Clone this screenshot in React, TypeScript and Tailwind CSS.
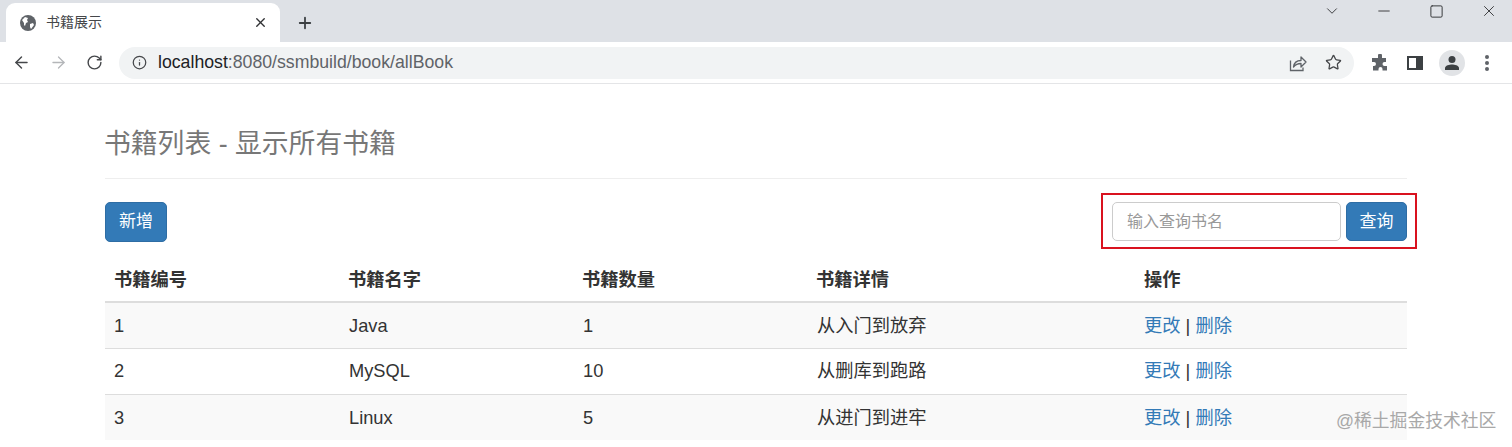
import React from 'react';
import { ArrowLeft, ArrowRight, ChevronDown, Info, Minus, Plus, RotateCw, Square, Star, X } from 'lucide-react';

const FONT = '"Liberation Sans", "Noto Sans CJK SC", sans-serif';

const books = [
    { id: 1, name: 'Java', count: 1, detail: '从入门到放弃' },
    { id: 2, name: 'MySQL', count: 10, detail: '从删库到跑路' },
    { id: 3, name: 'Linux', count: 5, detail: '从进门到进牢' },
];

const GlobeIcon = () => (
    <svg width="16" height="16" viewBox="0 0 16 16" className="shrink-0">
        <circle cx="8" cy="8" r="8" fill="#5f6368" />
        <path d="M2 5l3-3 3 1-1 2 1 2-2 1-1 3-1-1V8zM10 9l3-1 1 2-3 4-1-2z" fill="#fff" />
    </svg>
);

const ShareIcon = () => (
    <svg width="18" height="18" viewBox="0 0 18 18" fill="none" stroke="#5f6368" strokeWidth="1.3">
        <path d="M1.500 6.500v10h12.500v-3" />
        <path d="M4.500 13c.5-4 3.500-6.500 7.500-6.500V3l5 5-5 5V9.500c-3 0-5.500 1-7.500 3.500z" strokeLinejoin="round" />
    </svg>
);

const PuzzleIcon = () => (
    <svg width="18" height="18" viewBox="0 0 18 18">
        <path d="M7 1.500a2 2 0 0 1 4 0V4h4v4h-1.500a2 2 0 0 0 0 4H16v4.500H11.500V15a2 2 0 0 0-4 0v1.500H2V12h1a2 2 0 0 0 0-4H1V4h6z" fill="#5f6368" />
    </svg>
);

const SidePanelIcon = () => (
    <svg width="16" height="16" viewBox="0 0 16 16">
        <path d="M0 1h16v14H0z M2 3v10h7V3z" fill="#3c4043" fillRule="evenodd" />
    </svg>
);

const AvatarIcon = () => (
    <div className="w-[26px] h-[26px] rounded-full bg-[#e1e3e6] flex items-center justify-center">
        <svg width="16" height="16" viewBox="0 0 16 16">
            <circle cx="8" cy="4.500" r="3.500" fill="#3c4043" />
            <path d="M1 15v-2c0-2.500 4.500-3.600 7-3.600s7 1.100 7 3.600v2z" fill="#3c4043" />
        </svg>
    </div>
);

const BrowserChrome = () => (
    <div>
        <div className="h-[42px] bg-[#dee1e6] flex items-end pl-[6px] relative">
            <div className="w-[274px] h-[39px] bg-white rounded-t-[9px] flex items-center pl-[14px] pr-[12px]">
                <GlobeIcon />
                <span className="ml-[10px] text-[14px] text-[#45474a] flex-1">书籍展示</span>
                <X size={15} strokeWidth={2.2} className="text-[#303134]" />
            </div>
            <div className="ml-[16px] mb-[10px] text-[#3c4043]">
                <Plus size={18} strokeWidth={2.4} />
            </div>
            <div className="absolute top-[2px] right-[14px] flex items-center gap-[34px] text-[#2f3032]">
                <ChevronDown size={18} strokeWidth={1.2} />
                <Minus size={18} strokeWidth={1.2} />
                <Square size={15} strokeWidth={1.5} className="mx-[2px]" />
                <X size={18} strokeWidth={1.2} />
            </div>
        </div>
        <div className="h-[42px] bg-white border-b border-[#e4e5e7] flex items-center">
            <div className="flex items-center pl-[12px] gap-[18px]">
                <ArrowLeft size={19} strokeWidth={1.8} className="text-[#45474a]" />
                <ArrowRight size={19} strokeWidth={1.6} className="text-[#b4b6b9]" />
                <RotateCw size={17} strokeWidth={2} className="text-[#45474a]" />
            </div>
            <div className="ml-[16px] w-[1235px] h-[32px] rounded-full bg-[#f1f3f4] flex items-center pl-[13px] pr-[12px]">
                <Info size={15} strokeWidth={2} className="text-[#45474a]" />
                <span className="ml-[11px] text-[17.7px] text-[#5f6368] flex-1">
                    <span className="text-[#202124]">localhost</span>:8080/ssmbuild/book/allBook
                </span>
                <ShareIcon />
                <Star size={17} strokeWidth={1.8} className="ml-[18px] text-[#45474a]" />
            </div>
            <div className="ml-[17px] flex items-center">
                <PuzzleIcon />
                <div className="ml-[18px]"><SidePanelIcon /></div>
                <div className="ml-[16px]"><AvatarIcon /></div>
                <div className="ml-[20px] flex flex-col gap-[2px]">
                    <div className="w-[4px] h-[4px] rounded-full bg-[#5f6368]" />
                    <div className="w-[4px] h-[4px] rounded-full bg-[#5f6368]" />
                    <div className="w-[4px] h-[4px] rounded-full bg-[#5f6368]" />
                </div>
            </div>
        </div>
    </div>
);

const App: React.FC = () => {
    return (
        <div className="relative h-[447px] overflow-hidden bg-white text-[18.25px] text-[#333]" style={{ fontFamily: FONT }}>
            <BrowserChrome />

            <div className="w-[1302px] ml-[105px]">
                <div className="h-[95px] border-b border-[#eee] pt-[43px]">
                    <h3 className="text-[26.8px] leading-[34px] -ml-px text-[#777]">书籍列表 - 显示所有书籍</h3>
                </div>

                <div className="flex justify-between items-start mt-[23px]">
                    <button className="w-[62px] h-[40px] rounded-[5px] bg-[#337ab7] border border-[#2e6da4] text-white text-[17px]">新增</button>
                    <div className="flex gap-[5px]">
                        <input
                            placeholder="输入查询书名"
                            className="w-[229px] h-[39px] px-[14px] rounded-[5px] border border-[#ccc] text-[16px] placeholder:text-[#999] outline-none"
                        />
                        <button className="w-[61px] h-[39px] rounded-[5px] bg-[#337ab7] border border-[#2e6da4] text-white text-[17px]">查询</button>
                    </div>
                </div>

                <table className="w-full table-fixed mt-[17px] border-collapse">
                    <thead>
                        <tr className="h-[43px] border-b-2 border-[#ddd] text-left">
                            <th className="w-[234px] px-[9px] font-bold">书籍编号</th>
                            <th className="w-[234px] px-[9px] font-bold">书籍名字</th>
                            <th className="w-[234px] px-[9px] font-bold">书籍数量</th>
                            <th className="w-[327px] px-[9px] font-bold">书籍详情</th>
                            <th className="px-[10px] font-bold">操作</th>
                        </tr>
                    </thead>
                    <tbody>
                        {books.map((b, i) => (
                            <tr key={b.id} className={`h-[46px] border-b border-[#ddd] last:border-b-0 ${i % 2 === 0 ? 'bg-[#f9f9f9]' : 'bg-white'}`}>
                                <td className="px-[9px]">{b.id}</td>
                                <td className="px-[10px]">{b.name}</td>
                                <td className="px-[10px]">{b.count}</td>
                                <td className="px-[10px]">{b.detail}</td>
                                <td className="px-[10px]">
                                    <a className="text-[#337ab7]">更改</a> | <a className="text-[#337ab7]">删除</a>
                                </td>
                            </tr>
                        ))}
                    </tbody>
                </table>
            </div>

            {/* red annotation box and watermark sit on top of the page */}
            <div className="absolute left-[1101px] top-[193px] w-[316px] h-[56px] border-2 border-[#d9121f] pointer-events-none" />
            <div className="absolute left-[1336px] top-[409px] text-[17.8px] leading-[24px] text-[#a8a8a8]">@稀土掘金技术社区</div>
        </div>
    );
};

export default App;
